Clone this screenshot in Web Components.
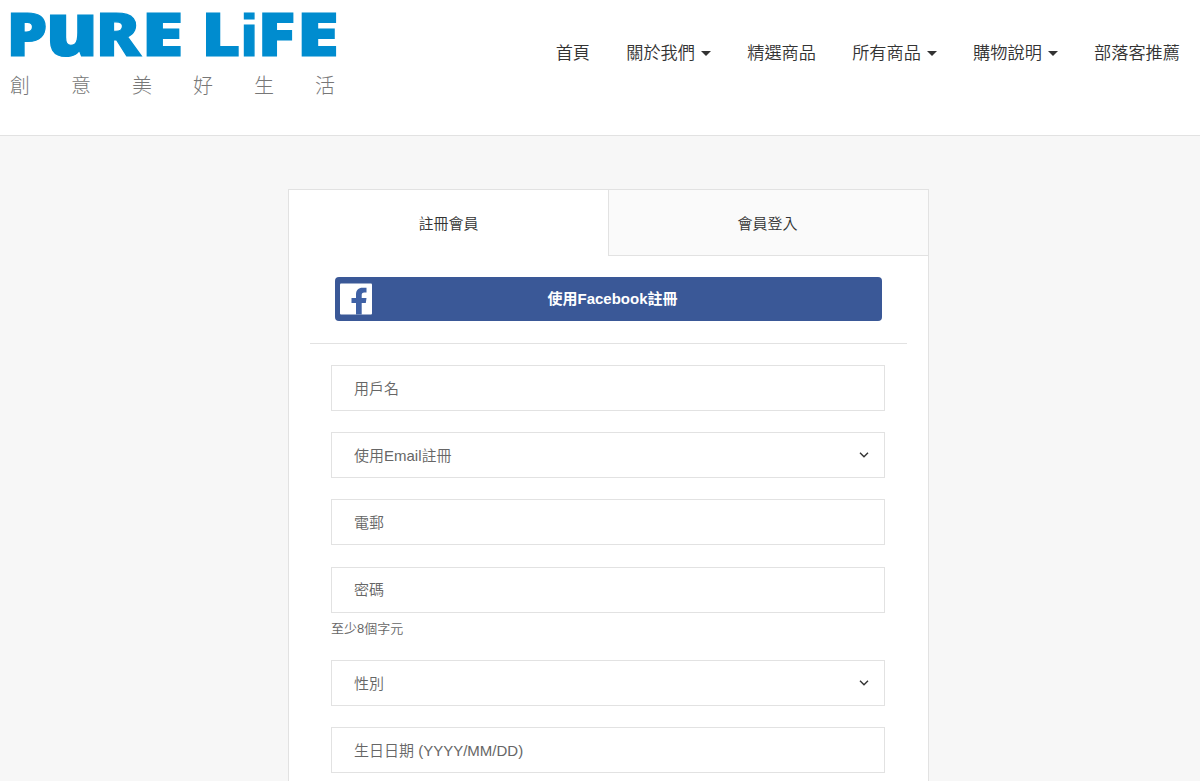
<!DOCTYPE html>
<html lang="zh-Hant">
<head>
<meta charset="utf-8">
<title>PURE LiFE</title>
<style>
html, body {
    margin: 0;
    height: 100%;
    overflow: hidden;
}
body {
    background: #f7f7f7;
    color: #333;
    font-family: "Liberation Sans", "Noto Sans CJK TC", sans-serif;
}
</style>
</head>
<body>
<shop-page>
    <shop-header slot="header">
        <shop-logo slot="logo">創意美好生活</shop-logo>
        <nav-item>首頁</nav-item>
        <nav-item dropdown>關於我們</nav-item>
        <nav-item>精選商品</nav-item>
        <nav-item dropdown>所有商品</nav-item>
        <nav-item dropdown>購物說明</nav-item>
        <nav-item>部落客推薦</nav-item>
    </shop-header>
    <member-card>
        <member-tab slot="tabs" active>註冊會員</member-tab>
        <member-tab slot="tabs">會員登入</member-tab>
        <facebook-button slot="social">使用Facebook註冊</facebook-button>
        <form-field>用戶名</form-field>
        <form-field select>使用Email註冊</form-field>
        <form-field>電郵</form-field>
        <form-field hint="至少8個字元">密碼</form-field>
        <form-field select>性別</form-field>
        <form-field>生日日期 (YYYY/MM/DD)</form-field>
    </member-card>
</shop-page>

<script>
function define(name, html, setup) {
    const template = document.createElement('template');
    template.innerHTML = html;
    customElements.define(name, class extends HTMLElement {
        constructor() {
            super();
            this.attachShadow({mode: 'open'});
            this.shadowRoot.appendChild(template.content.cloneNode(true));
            if (setup) setup(this);
        }
    });
}

define('shop-page', `
<style>
:host {
    display: flex;
    flex-direction: column;
    height: 100vh;
    overflow: hidden;
}
main {
    flex: 1;
    min-height: 0;
    display: flex;
    padding: 53px 0 0 288px;
}
</style>
<slot name="header"></slot>
<main><slot></slot></main>
`);

define('shop-header', `
<style>
:host {
    display: flex;
    flex: none;
    justify-content: space-between;
    align-items: flex-start;
    box-sizing: border-box;
    height: 136px;
    padding: 0 20px 0 10px;
    background: #fff;
    border-bottom: 1px solid #e2e2e2;
}
nav {
    display: flex;
    gap: 36.2px;
    margin-top: 40px;
}
</style>
<slot name="logo"></slot>
<nav><slot></slot></nav>
`);

define('shop-logo', `
<style>
:host {
    display: block;
    width: 330px;
}
svg {
    display: block;
    overflow: visible;
}
text {
    font-family: "Open Sans", sans-serif;
    font-weight: 800;
    font-size: 59.5px;
    fill: #008ccf;
    stroke: #008ccf;
    stroke-width: 1.2px;
}
.u {
    font-size: 75px;
}
.i {
    font-family: "Liberation Sans", sans-serif;
    font-size: 58.5px;
}
.tagline {
    display: flex;
    justify-content: space-between;
    width: 325px;
    margin-top: 5px;
    font-family: "Noto Sans CJK TC", sans-serif;
    font-size: 20px;
    font-weight: 300;
    line-height: 28px;
    color: #777;
}
</style>
<svg width="330" height="66" viewBox="0 0 330 66" role="img">
    <text y="56.4"><tspan x="-3.4" textLength="41" lengthAdjust="spacingAndGlyphs">P</tspan><tspan class="u" x="35.6" textLength="52.5" lengthAdjust="spacingAndGlyphs">u</tspan><tspan x="85.6" textLength="45" lengthAdjust="spacingAndGlyphs">R</tspan><tspan x="131.4" textLength="42" lengthAdjust="spacingAndGlyphs">E</tspan> <tspan x="191.6" textLength="39" lengthAdjust="spacingAndGlyphs">L</tspan><tspan class="i" x="229.8" textLength="19" lengthAdjust="spacingAndGlyphs">i</tspan><tspan x="247.6" textLength="38" lengthAdjust="spacingAndGlyphs">F</tspan><tspan x="286.6" textLength="42.5" lengthAdjust="spacingAndGlyphs">E</tspan></text>
</svg>
<div class="tagline"></div>
`, el => {
    const tagline = el.shadowRoot.querySelector('.tagline');
    for (const char of el.textContent.trim()) {
        const span = document.createElement('span');
        span.textContent = char;
        tagline.appendChild(span);
    }
});

define('nav-item', `
<style>
:host {
    display: flex;
    align-items: center;
    font-size: 17.2px;
    font-weight: 350;
    line-height: 26px;
    white-space: nowrap;
    color: #333;
}
i {
    display: none;
    margin: 1px 0 0 6px;
    border: 5px solid transparent;
    border-top-color: #333;
    border-bottom: 0;
}
:host([dropdown]) i {
    display: block;
}
</style>
<slot></slot><i></i>
`);

define('member-card', `
<style>
:host {
    display: block;
    box-sizing: border-box;
    width: 641px;
    height: 700px;
    background: #fff;
    border: 1px solid #e2e2e2;
}
.tabs {
    display: flex;
    height: 66px;
}
.social {
    margin: 0 21px;
    padding: 21px 25px 22px;
    border-bottom: 1px solid #e2e2e2;
}
.fields {
    padding: 21px 43px 0 42px;
}
</style>
<div class="tabs"><slot name="tabs"></slot></div>
<div class="social"><slot name="social"></slot></div>
<div class="fields"><slot></slot></div>
`);

define('member-tab', `
<style>
:host {
    display: flex;
    flex: 1;
    align-items: center;
    justify-content: center;
    box-sizing: border-box;
    padding-right: 2px;
    font-size: 15px;
    font-weight: 350;
    color: #333;
    background: #fafafa;
    border: solid #e2e2e2;
    border-width: 0 0 1px 1px;
}
:host([active]) {
    flex: 0 0 319px;
    padding: 0;
    background: #fff;
    border-width: 0 0 1px;
    border-color: transparent;
}
</style>
<slot></slot>
`);

define('facebook-button', `
<style>
:host {
    display: flex;
    align-items: center;
    box-sizing: border-box;
    height: 44px;
    padding: 0 5px;
    border-radius: 4px;
    background: #3a5897;
    color: #fff;
    font-size: 15px;
    font-weight: bold;
}
svg {
    flex: none;
}
span {
    flex: 1;
    text-align: center;
    padding: 0 24px 3px 0;
}
</style>
<svg width="32" height="32" viewBox="0 0 32 32">
    <rect y=".5" width="32" height="31" rx="1" fill="#fff"/>
    <path fill="#3f61a5" d="M16 31.5V20H11.5V15H16V11.5C16 7 18.5 4.7 22.5 4.7H26.5V9.5H24.3C22.3 9.5 21.7 10.5 21.7 12.3V15H26.5L25.8 20H21.7V31.5Z"/>
</svg>
<span><slot></slot></span>
`);

define('form-field', `
<style>
:host {
    display: block;
    margin-bottom: 21.2px;
    font-weight: 350;
    color: #666;
}
.box {
    display: flex;
    align-items: center;
    justify-content: space-between;
    box-sizing: border-box;
    height: 46px;
    padding: 0 15px 0 22px;
    border: 1px solid #e2e2e2;
    font-size: 15px;
}
span {
    padding-bottom: 2px;
}
svg {
    display: none;
}
:host([select]) svg {
    display: block;
}
.hint {
    height: 26.5px;
    padding-top: 5px;
    box-sizing: border-box;
    font-size: 13px;
    line-height: 22px;
}
.hint:empty {
    display: none;
}
</style>
<div class="box">
    <span><slot></slot></span>
    <svg width="10" height="6" viewBox="0 0 10 6" fill="none" stroke="#333" stroke-width="1.4">
        <path d="M1 .8L5 4.8L9 .8"/>
    </svg>
</div>
<div class="hint"></div>
`, el => {
    el.shadowRoot.querySelector('.hint').textContent = el.getAttribute('hint') || '';
});
</script>
</body>
</html>
